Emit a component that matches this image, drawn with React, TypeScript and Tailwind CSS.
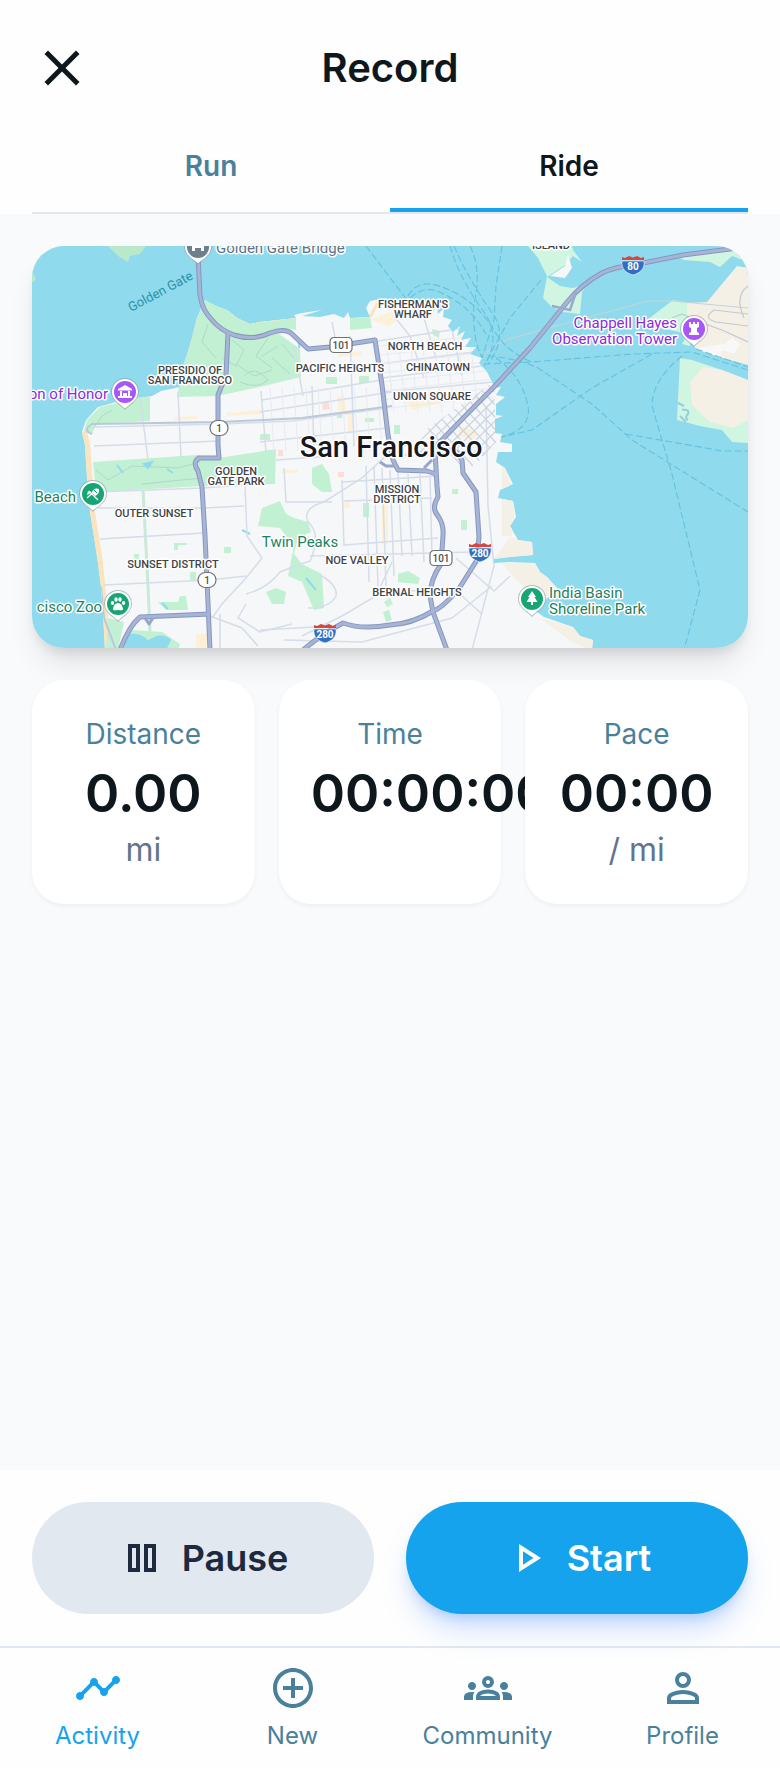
import React from "react";
import { MdAddCircleOutline, MdClose, MdTimeline } from "react-icons/md";

type IconProps = { className?: string };

function GroupsIcon({ className }: IconProps) {
  return (
    <svg viewBox="0 0 24 24" fill="currentColor" className={className} aria-hidden="true">
      <path d="M0 18v-1.575q0-1.075 1.1-1.75T4 14q.325 0 .625.013t.575.062q-.35.525-.525 1.1t-.175 1.2V18zm6 0v-1.625q0-.8.438-1.463t1.237-1.162T9.588 13T12 12.75q1.325 0 2.438.25t1.912.75t1.225 1.163t.425 1.462V18zm13.5 0v-1.625q0-.65-.163-1.225t-.487-1.075q.275-.05.563-.062T20 14q1.8 0 2.9.663t1.1 1.762V18zM8.125 16H15.9q-.25-.5-1.388-.875T12 14.75t-2.512.375T8.125 16M4 13q-.825 0-1.412-.587T2 11q0-.85.588-1.425T4 9q.85 0 1.425.575T6 11q0 .825-.575 1.413T4 13m16 0q-.825 0-1.412-.587T18 11q0-.85.588-1.425T20 9q.85 0 1.425.575T22 11q0 .825-.575 1.413T20 13m-8-1q-1.25 0-2.125-.875T9 9q0-1.275.875-2.137T12 6q1.275 0 2.138.863T15 9q0 1.25-.862 2.125T12 12m0-2q.425 0 .713-.288T13 9t-.288-.712T12 8t-.712.288T11 9t.288.713T12 10" />
    </svg>
  );
}

function PersonIcon({ className }: IconProps) {
  return (
    <svg viewBox="0 0 24 24" fill="currentColor" className={className} aria-hidden="true">
      <path d="M12 12q-1.65 0-2.825-1.175T8 8t1.175-2.825T12 4t2.825 1.175T16 8t-1.175 2.825T12 12m-8 8v-2.8q0-.85.438-1.562T5.6 14.55q1.55-.775 3.15-1.162T12 13t3.25.388t3.15 1.162q.725.375 1.163 1.088T20 17.2V20zm2-2h12v-.8q0-.275-.137-.5t-.363-.35q-1.35-.675-2.725-1.012T12 15t-2.775.338T6.5 16.35q-.225.125-.363.35T6 17.2zm6-8q.825 0 1.413-.587T14 8t-.587-1.412T12 6t-1.412.588T10 8t.588 1.413T12 10" />
    </svg>
  );
}

function PauseIcon({ className }: IconProps) {
  return (
    <svg viewBox="0 0 24 24" fill="currentColor" className={className} aria-hidden="true">
      <path d="M13 19V5h6v14zm-8 0V5h6v14zm10-2h2V7h-2zm-8 0h2V7H7z" />
    </svg>
  );
}

function PlayIcon({ className }: IconProps) {
  return (
    <svg viewBox="0 0 24 24" fill="currentColor" className={className} aria-hidden="true">
      <path d="M8 19V5l11 7zm2-3.65L15.25 12L10 8.65z" />
    </svg>
  );
}

const LAND =
  "M173 54 L184 60 L195 64 L205 72 L218 78 L228 76 L264 72 L262 69 L270 67 L290 64 L270 70 L288 71 L302 68 L312 72 L316 66 L318 72 L338 71 L334 62 L338 55 L348 53 L361 60 L401 66 L405 60 L406 68 L412 62 L411 71 L420 74 L416 80 L421 86 L428 80 L425 90 L433 85 L429 94 L439 92 L433 101 L444 101 L438 108 L450 112 L447 117 L455 126 L461 138 L462 142 L469 141 L464 149 L473 151 L464 158 L464 169 L471 170 L463 173 L463 187 L470 188 L468 196 L480 198 L480 206 L466 206 L464 216 L473 222 L481 238 L468 244 L466 252 L481 255 L484 271 L478 280 L486 294 L500 296 L501 309 L478 311 L462 313 L462 317 L478 316 L503 317 L508 326 L515 331 L526 343 L515 352 L505 366 L512 371 L541 381 L548 390 L561 394 L560 404 L73 404 L71 367 L69 341 L66 317 L62 291 L58 266 L55 231 L53 199 L50 186 L54 174 L66 161 L84 156 L105 152 L120 150 L129 145 L148 141 L150 122 L155 109 L160 92 L165 72 Z";

const PARKS = [
  "M173 54 L195 64 L205 72 L218 78 L264 72 L264 84 L256 83 L244 86 L268 103 L269 131 L232 140 L185 150 L145 151 L150 122 L155 109 L160 92 L165 72 Z",
  "M68 161 L105 152 L118 150 L118 175 L64 178 L60 188 L52 186 L55 174 Z",
  "M61 216 L165 209 L187 212 L244 203 L243 238 L170 240 L64 246 Z",
  "M318 72 L338 71 L340 82 L318 84 Z",
  "M230 262 L248 255 L254 268 L262 272 L276 276 L279 286 L266 292 L262 308 L270 318 L290 328 L292 362 L282 364 L270 336 L256 330 L262 300 L248 282 L226 280 Z",
  "M126 356 L146 356 L148 350 L154 350 L156 364 L134 364 Z",
  "M76 372 L92 376 L86 404 L74 404 Z",
  "M100 384 L130 386 L148 398 L146 404 L92 404 Z",
  "M234 346 L244 342 L254 346 L252 358 L240 358 Z",
  "M366 328 L376 325 L388 332 L386 338 L366 336 Z",
  "M280 222 L290 218 L297 228 L300 246 L290 246 L280 238 Z",
  "M294 131 h11 v7 h-11z M327 130 h10 v7 h-10z M305 166 h5 v6 h-5z M333 172 h9 v4 h-9z M362 179 h6 v9 h-6z",
  "M331 257 h6 v14 h-6z M420 243 h6 v5 h-6z M429 274 h6 v10 h-6z M158 326 h6 v8 h-6z M192 301 h7 v6 h-7z M102 308 h5 v5 h-5z",
  "M351 366 l6 -2 l3 10 l-6 2z M352 356 l6 -4 l3 6 l-6 3z M400 83 l8 2 l-1 7 l-6 -3z M142 297 h13 v2 h-9 v5 h-4z M228 188 h10 v6 h-10z",
];

const MAJOR_ROADS = [
  "M166 10 L168 49 Q170 64 180 74 Q188 84 202 89 Q221 95 238 87 Q252 82 259 87 L276 103 L298 101 L343 94 L350 139 L356 189 L361 214 L366 224 L395 225 L404 228",
  "M196 87 L194 129 L186 149 L186 199 L187 212 L167 212 Q160 216 166 225 L170 241 L173 290 L175 334 L178 404",
  "M178 368 L108 371 Q97 380 88 404",
  "M716 0 L698 3 L651 9 L601 19 Q582 21 570 27 Q550 38 536 55 L498 102 L461 142 L441 162 L404 200",
  "M403 205 L405 240 L406 251 Q399 262 406 270 Q412 278 411 290 L409 318 Q398 334 398 350 L401 366 L415 404",
  "M404 200 L424 206 L430 214 L431 227 L444 246 L447 291 L445 314 L428 341 Q411 362 401 365 Q380 378 358 379 Q330 384 311 377 Q290 388 271 404",
];

const AVENUES = [
  "M64 181 L190 178 L260 175 L356 162",
  "M108 150 L116 214",
  "M146 146 L149 212",
  "M229 145 L234 206",
  "M62 200 L187 195",
  "M64 246 L170 242 L240 237",
  "M66 262 L172 262 L212 260",
  "M68 293 L172 287",
  "M72 339 L178 334 L214 330",
  "M213 240 L215 290 L230 312 L214 332 L190 358 L180 372",
  "M214 348 Q236 342 248 326 Q262 320 278 315 Q290 288 276 276 Q270 262 292 256 L330 232 L360 204",
  "M280 140 L282 205 M262 100 L271 150 M318 90 L322 200 M300 76 L304 96",
  "M228 196 L356 182 M228 166 L360 146 M230 154 L350 134",
  "M340 96 L458 78 M348 118 L442 106 M350 132 L450 120 M352 146 L462 136",
  "M244 214 L300 210 M252 222 L254 256 L300 256 M310 234 L312 300",
  "M334 220 L337 336 M342 220 L346 340 M350 222 L354 340 M358 224 L362 330 M366 226 L370 310 M376 228 L380 310 M388 228 L392 316 M398 230 L400 310",
  "M310 236 L405 230 M312 255 L400 252 M312 299 L406 292 M278 310 L440 306",
  "M360 316 L344 350 L310 370 L270 390 M360 344 L430 346",
  "M454 160 L456 260 L462 320 L440 404",
  "M424 312 L462 345 L478 330 M430 350 L450 368",
  "M228 384 L300 380 M252 394 L330 396 L420 372 L460 340",
  "M290 330 Q306 340 304 350 Q298 362 276 362",
  "M188 368 L188 404 M178 370 L210 382 L226 400 M214 358 L206 372 L228 386 L260 378",
  "M362 70 L378 90 L392 132 M392 72 L404 112 M420 84 L430 130",
];

const FERRIES = [
  "M334 0 L372 50 L400 88",
  "M418 0 Q428 34 452 66 Q470 92 452 120",
  "M422 0 Q436 32 458 64 Q478 88 456 118",
  "M438 0 Q450 24 442 58 Q440 92 450 112",
  "M470 0 L464 40 L462 74 L450 112",
  "M376 50 Q384 36 400 38 Q440 48 462 84 Q474 106 500 116",
  "M378 52 Q388 42 402 44 Q436 56 454 88",
  "M509 34 L478 72 L455 114",
  "M452 118 L500 116 L600 108 L660 106 L716 124",
  "M620 108 L560 142 L500 184 L464 192",
  "M664 103 L716 121",
  "M464 112 Q490 130 496 160 Q500 184 466 192",
  "M456 110 Q484 112 506 122 L560 158 L600 194 L716 266",
  "M650 110 Q620 134 620 160 L640 228 L668 344 L652 404",
  "M594 188 L640 196 L690 205 L716 205",
];

type Kind = "area" | "park" | "sight";
type MapLabel = { text: string; x: number; y: number; kind: Kind; anchor?: "start" | "middle" | "end" };

const LABELS: MapLabel[] = [
  { text: "ISLAND", x: 519, y: 3, kind: "area" },
  { text: "PRESIDIO OF", x: 158, y: 128, kind: "area" },
  { text: "SAN FRANCISCO", x: 158, y: 138, kind: "area" },
  { text: "FISHERMAN'S", x: 381, y: 62, kind: "area" },
  { text: "WHARF", x: 381, y: 72, kind: "area" },
  { text: "NORTH BEACH", x: 393, y: 104, kind: "area" },
  { text: "PACIFIC HEIGHTS", x: 308, y: 126, kind: "area" },
  { text: "CHINATOWN", x: 406, y: 125, kind: "area" },
  { text: "UNION SQUARE", x: 400, y: 154, kind: "area" },
  { text: "GOLDEN", x: 204, y: 229, kind: "area" },
  { text: "GATE PARK", x: 204, y: 239, kind: "area" },
  { text: "OUTER SUNSET", x: 122, y: 271, kind: "area" },
  { text: "SUNSET DISTRICT", x: 141, y: 322, kind: "area" },
  { text: "MISSION", x: 365, y: 247, kind: "area" },
  { text: "DISTRICT", x: 365, y: 257, kind: "area" },
  { text: "NOE VALLEY", x: 325, y: 318, kind: "area" },
  { text: "BERNAL HEIGHTS", x: 385, y: 350, kind: "area" },
  { text: "on of Honor", x: 76, y: 153, kind: "sight", anchor: "end" },
  { text: "Chappell Hayes", x: 645, y: 82, kind: "sight", anchor: "end" },
  { text: "Observation Tower", x: 645, y: 98, kind: "sight", anchor: "end" },
  { text: "Beach", x: 44, y: 256, kind: "park", anchor: "end" },
  { text: "cisco Zoo", x: 70, y: 366, kind: "park", anchor: "end" },
  { text: "Twin Peaks", x: 268, y: 301, kind: "park" },
  { text: "India Basin", x: 517, y: 352, kind: "park", anchor: "start" },
  { text: "Shoreline Park", x: 517, y: 368, kind: "park", anchor: "start" },
];

const LABEL_STYLE: Record<Kind, string> = {
  area: "fill-[#3f4347] text-[11px] font-medium",
  park: "fill-[#1c8160] text-[15px]",
  sight: "fill-[#8b2be0] text-[15px]",
};

function Pin({ x, y, color, children }: { x: number; y: number; color: string; children?: React.ReactNode }) {
  return (
    <g transform={`translate(${x} ${y})`}>
      <path d="M0 18 C-3 14 -14 9 -14 0 A14 14 0 1 1 14 0 C14 9 3 14 0 18Z" fill="#8a99a5" opacity="0.6" />
      <path d="M0 16.500 C-3 13 -13 9 -13 0 A13 13 0 1 1 13 0 C13 9 3 13 0 16.500Z" fill="#fff" />
      <circle r="11" fill={color} />
      <g fill="#fff">{children}</g>
    </g>
  );
}

function Interstate({ x, y, label }: { x: number; y: number; label: string }) {
  return (
    <g transform={`translate(${x} ${y})`}>
      <path d="M-11 -4 H11 C12 4 7 8 0 10 C-7 8 -12 4 -11 -4Z" fill="#2f6fc4" stroke="#fff" strokeWidth="0.6" />
      <path d="M-11 -8 L-8 -7 L-4 -9 L0 -7.500 L4 -9 L8 -7 L11 -8 V-5 H-11Z" fill="#d9453f" />
      <text y="5" textAnchor="middle" className="fill-white text-[10px] font-bold">{label}</text>
    </g>
  );
}

function Route({ x, y, label, width }: { x: number; y: number; label: string; width: number }) {
  return (
    <g transform={`translate(${x} ${y})`}>
      <rect x={-width / 2} y="-7.500" width={width} height="15" rx={label === "1" ? 7.5 : 4} fill="#fff" stroke="#6d7278" strokeWidth="1.200" />
      <text y="4" textAnchor="middle" className="fill-[#4a4e53] text-[10px] font-medium">{label}</text>
    </g>
  );
}

function RouteMap() {
  return (
    <svg
      viewBox="0 0 716 402"
      preserveAspectRatio="xMidYMid slice"
      role="img"
      aria-label="Map of San Francisco"
      className="block size-full font-['Roboto',sans-serif]"
    >
      <defs>
        <clipPath id="land">
          <path d={LAND} />
        </clipPath>
        <clipPath id="downtown">
          <path d="M362 206 L462 136 L464 196 L432 232 L400 220Z" />
        </clipPath>
      </defs>
      <rect width="716" height="403" fill="#90daee" />

      <path d="M0 0 H12 Q4 8 0 14Z M0 24 L4 34 L0 36Z M76 0 H114 L108 8 L98 10 L96 16 L86 10Z" fill="#b9e8cb" />

      <g fill="#d0f5e0">
        <path d="M496 0 L506 12 L515 30 L511 52 L520 61 L531 66 L548 68 L550 46 L555 39 L540 42 L528 40 L515 31 L533 19 L541 10 L550 16 L541 4 L540 0Z" />
        <path d="M648 12 L698 3 L716 2 V16 L700 10 L688 21 L678 16 L652 14Z" />
        <path d="M615 74 L641 54 L658 57 L658 100 L650 98 L656 88 L620 80Z" />
        <path d="M648 112 L645 174 L668 180 L690 184 L700 196 L716 197 V134 L690 124 L660 114Z" />
      </g>
      <g fill="#f4f0e6">
        <path d="M716 22 L705 20 L675 56 L655 57 L656 92 L665 104 L691 112 L716 119Z" />
        <path d="M671 121 L658 136 L660 159 L678 176 L701 182 L716 174 V134 L690 124Z" />
        <path d="M518 30 L533 20 L536 8 L540 22 L533 32Z" fill="#f6f7f8" />
      </g>
      <g fill="none" stroke="#c2c8d4" strokeWidth="1.200">
        <path d="M716 62 L640 55 L616 55 L480 92 Q460 98 446 116" stroke="#c5d3da" />
        <path d="M716 80 L684 76 Q670 72 682 64 L716 68 M716 96 L690 84 Q672 78 650 68 L640 72 M716 40 Q702 50 712 72" />
      </g>
      <path d="M666 102 L692 98 L700 92 L708 98 L702 108 L690 104 L688 112Z" fill="#f8f8f8" />
      <path d="M646 157 l6 3 M650 164 q8 -1 6 4 q-4 4 0 6 M648 170 l6 6" stroke="#90cfe6" strokeWidth="2" fill="none" />

      <g fill="none" stroke="#62c2df" strokeWidth="1.100" strokeDasharray="7 3">
        {FERRIES.map((d) => (
          <path key={d} d={d} />
        ))}
      </g>

      <path d={LAND} fill="#f6f7f8" />
      <g clipPath="url(#land)">
        <path d="M50 186 L53 199 L58 266 L66 317 L71 367 L73 404" fill="none" stroke="#fbe3bd" strokeWidth="10" />
        <path d="M195 64 L218 78 L264 72 M165 72 L155 109 M338 71 L348 53" fill="none" stroke="#fbe3bd" strokeWidth="3" />
        <path d="M478 291 L501 296 L501 309 L462 313 Z M470 317 L503 317 L526 343 L512 356 L484 334Z M508 372 L541 381 L561 394 L560 404 L540 396Z M470 216 L484 250 L480 290 L470 290Z" fill="#f4f0e6" />
        <g fill="#fdf0d8">
          <path d="M143 171 l22 -1 v3 l-22 1z M195 167 l34 -3 v4 l-34 2z M306 108 l24 -3 v4 l-24 2z M305 150 l7 0 l3 16 l-8 2z M370 150 l40 -6 l4 12 l-34 8z M338 74 l20 -8 l12 6 l-14 8z M310 256 h8 v6 h-8z M250 224 h16 v3 h-16z M350 258 h6 v40 h-6z M164 388 h12 v16 h-12z M316 168 h4 v20 h-4z M428 180 l18 6 l-4 8 l-16 -4z" />
        </g>
        <g fill="#fbdcd8">
          <path d="M71 168 L86 165 V176 L71 175Z M290 156 l6 -1 l2 8 l-7 1z M306 226 h6 v5 h-6z M246 204 h5 v6 h-5z" />
        </g>
        {PARKS.map((d) => (
          <path key={d} d={d} fill="#c1f0d3" />
        ))}
        <g fill="none" stroke="#b3d6cc" strokeWidth="1">
          <path d="M176 78 L170 96 L184 112 M200 94 L212 104 L204 120 L190 112 M212 130 Q222 118 236 134 Q226 144 208 136 M204 118 L222 130 L240 124 M236 92 L224 110 L240 122 M62 182 L70 170 L80 164 M64 224 L76 234 L100 220 L146 222 L168 216 M110 238 L170 232 M246 100 L230 110 M250 98 L262 112 M240 112 L258 128" />
        </g>
        <path d="M85 219 l6 8 M112 218 l8 -2 l-4 6z M135 223 l6 4 M264 90 l4 6 l-1 6 M274 332 l10 12 M218 288 l-8 -4 M94 390 Q108 386 116 396 Q128 386 138 394 L134 402 H92 M130 357 l6 6" fill="#90daee" stroke="#90daee" strokeWidth="2" />
        <path d="M111 244 L116 340 L118 386" fill="none" stroke="#c8ead6" strokeWidth="3" />
        <g fill="none" stroke="#d5dde8" strokeWidth="1.500">
          {AVENUES.map((d) => (
            <path key={d} d={d} />
          ))}
        </g>
        <g fill="none" stroke="#e6ebf1" strokeWidth="1">
          {[0, 1, 2, 3, 4, 5, 6, 7, 8, 9].map((n) => (
            <path key={n} d={`M${238 + n * 12} 142 L${242 + n * 12} 205`} />
          ))}
          {[0, 1, 2, 3, 4, 5, 6, 7].map((n) => (
            <path key={n} d={`M${354 + n * 12} 92 L${362 + n * 12} 166 M348 ${100 + n * 9} L462 ${88 + n * 9}`} />
          ))}
        </g>
        <g clipPath="url(#downtown)" fill="none" stroke="#ccd6e3" strokeWidth="1.300">
          {[0, 1, 2, 3, 4, 5, 6, 7, 8, 9, 10, 11].map((n) => (
            <path key={n} d={`M${340 + n * 11} 210 L${430 + n * 11} 120 M${340 + n * 11} 120 L${430 + n * 11} 220`} />
          ))}
        </g>
        <path d="M60 188 Q50 184 60 178 L190 176 L270 172 L360 160 M69 341 L72 372 L84 404" fill="none" stroke="#bcc8d8" strokeWidth="2" />
      </g>

      <g fill="none" strokeLinejoin="round">
        {MAJOR_ROADS.map((d) => (
          <path key={d} d={d} stroke="#8897c0" strokeWidth="5" />
        ))}
        {MAJOR_ROADS.map((d) => (
          <path key={d} d={d} stroke="#a6b4d6" strokeWidth="3" />
        ))}
        <path d="M520 60 L538 64 L544 46" stroke="#9aa9cc" strokeWidth="2.500" />
        <path d="M348 216 L354 220 L362 220 M392 222 L400 214 M113 372 L117 378 L121 372" stroke="#96a5cb" strokeWidth="3" />
      </g>

      <Route x={309} y={99} label="101" width={22} />
      <Route x={409} y={312} label="101" width={22} />
      <Route x={187} y={182} label="1" width={18} />
      <Route x={175} y={334} label="1" width={18} />
      <Interstate x={601} y={19} label="80" />
      <Interstate x={448} y={306} label="280" />
      <Interstate x={293} y={387} label="280" />

      <Pin x={166} y={1} color="#6b7f8e">
        <path d="M-6 4 V-2 H6 V4 H3 V1 H-3 V4Z" />
      </Pin>
      <Pin x={93} y={146} color="#a856f7">
        <path d="M0 -7 L7 -3 V-1.500 H-7 V-3Z M-5 -1 H-3 V4 H-5Z M-2 1 H2 V4 H-2Z M3 -1 H5 V4 H3Z M-7 4 H7 V6 H-7Z" />
      </Pin>
      <Pin x={662} y={83} color="#a856f7">
        <path d="M-5 -7 H-3 V-5 H-1 V-7 H1 V-5 H3 V-7 H5 V-2 L3 -1 V3 L5 4 V6 H-5 V4 L-3 3 V-1 L-5 -2Z" />
      </Pin>
      <Pin x={61} y={248} color="#17a673">
        <path d="M-6 1 L-5 -3 L-2 -1 Z M-1 -2 Q1 -7 6 -5 Q7 0 2 2 Z" />
        <path d="M-6 4 L4 -5 M-4 -3 L5 6" stroke="#fff" strokeWidth="1.200" />
        <path d="M1 -4 L4 -1" stroke="#17a673" strokeWidth="1" />
      </Pin>
      <Pin x={86} y={358} color="#17a673">
        <ellipse cx="-5.500" cy="-1" rx="1.700" ry="2.100" />
        <ellipse cx="-2" cy="-4.500" rx="1.700" ry="2.200" />
        <ellipse cx="2" cy="-4.500" rx="1.700" ry="2.200" />
        <ellipse cx="5.500" cy="-1" rx="1.700" ry="2.100" />
        <path d="M0 -1 C3 -1 5 3 5 5 C5 7 2 6 0 6 C-2 6 -5 7 -5 5 C-5 3 -3 -1 0 -1Z" />
      </Pin>
      <Pin x={500} y={353} color="#17a673">
        <path d="M0 -8 L4 -2 H2.500 L5.500 3 H1 V6 H-1 V3 H-5.500 L-2.500 -2 H-4Z" />
      </Pin>

      <g stroke="#fff" strokeWidth="3" strokeLinejoin="round" className="[paint-order:stroke]">
        <text x="184" y="7" className="fill-[#5b7487] text-[15px]">Golden Gate Bridge</text>
        {LABELS.map((l) => (
          <text key={l.text} x={l.x} y={l.y} textAnchor={l.anchor ?? "middle"} className={LABEL_STYLE[l.kind]}>
            {l.text}
          </text>
        ))}
        <text x="359" y="211" textAnchor="middle" className="fill-[#16181b] text-[29px] font-medium">San Francisco</text>
      </g>
      <text transform="translate(99 66) rotate(-28)" className="fill-[#2a93a8] text-[13px]">Golden Gate</text>
    </svg>
  );
}

const TABS = [
  { label: "Run", active: false },
  { label: "Ride", active: true },
];

const STATS = [
  { label: "Distance", value: "0.00", unit: "mi" },
  { label: "Time", value: "00:00:00", unit: "" },
  { label: "Pace", value: "00:00", unit: "/ mi" },
];

const NAV = [
  { label: "Activity", Icon: MdTimeline, active: true },
  { label: "New", Icon: MdAddCircleOutline, active: false },
  { label: "Community", Icon: GroupsIcon, active: false },
  { label: "Profile", Icon: PersonIcon, active: false },
];

export default function App() {
  return (
    <div className="flex min-h-screen flex-col bg-slate-50 font-['Inter',sans-serif] text-[#0d171c]">
      <header className="bg-[#fefefe] px-8 pt-8">
        <div className="grid h-[72px] grid-cols-[60px_1fr_60px] items-center">
          <button type="button" aria-label="Close" className="flex">
            <MdClose className="size-[60px]" />
          </button>
          <h1 className="text-center text-[40px] leading-[72px] font-semibold">Record</h1>
        </div>
        <div role="tablist" className="mt-4 flex border-b-2 border-slate-200">
          {TABS.map((tab) => (
            <button
              key={tab.label}
              type="button"
              role="tab"
              aria-selected={tab.active}
              className={
                tab.active
                  ? "flex-1 border-b-4 border-[#14a3ec] pt-[26px] pb-[22px] text-[28px] leading-10 font-semibold"
                  : "flex-1 border-b-4 border-transparent pt-[26px] pb-[22px] text-[28px] leading-10 font-semibold text-[#49819c]"
              }
            >
              {tab.label}
            </button>
          ))}
        </div>
      </header>

      <main className="flex flex-1 flex-col gap-8 p-8">
        <div className="aspect-[716/402] overflow-hidden rounded-[32px] shadow-[0_20px_30px_-6px_rgba(0,0,0,0.1),0_8px_12px_-4px_rgba(0,0,0,0.1)]">
          <RouteMap />
        </div>
        <dl className="grid grid-cols-3 gap-6">
          {STATS.map((stat) => (
            <div
              key={stat.label}
              className="min-w-0 rounded-[32px] bg-white px-8 pt-[34px] pb-[30px] text-center shadow-[0_2px_4px_rgba(0,0,0,0.05)]"
            >
              <dt className="text-[28px] leading-10 text-[#49819c]">{stat.label}</dt>
              <dd className="mt-2 text-[52px] leading-16 font-semibold whitespace-nowrap">{stat.value}</dd>
              {stat.unit && <dd className="text-[32px] leading-12 text-slate-500">{stat.unit}</dd>}
            </div>
          ))}
        </dl>
      </main>

      <footer className="bg-[#fefefe]">
        <div className="grid grid-cols-2 gap-8 p-8">
          <button
            type="button"
            className="flex h-28 items-center justify-center gap-4 rounded-full bg-slate-200 text-[36px] leading-[56px] font-semibold text-slate-800"
          >
            <PauseIcon className="size-12" />
            Pause
          </button>
          <button
            type="button"
            className="flex h-28 items-center justify-center gap-4 rounded-full bg-[#14a3ec] text-[36px] leading-[56px] font-semibold text-white shadow-[0_20px_30px_-6px_rgba(59,130,246,0.25),0_8px_12px_-4px_rgba(59,130,246,0.25)]"
          >
            <PlayIcon className="size-12" />
            Start
          </button>
        </div>
        <nav className="grid grid-cols-4 border-t-2 border-slate-200 py-4">
          {NAV.map(({ label, Icon, active }) => (
            <a
              key={label}
              href="#"
              aria-current={active ? "page" : undefined}
              className={
                active
                  ? "flex flex-col items-center gap-2 text-[24px] leading-8 text-[#14a3ec]"
                  : "flex flex-col items-center gap-2 text-[24px] leading-8 text-[#49819c]"
              }
            >
              <Icon className="size-12" />
              {label}
            </a>
          ))}
        </nav>
      </footer>
    </div>
  );
}
